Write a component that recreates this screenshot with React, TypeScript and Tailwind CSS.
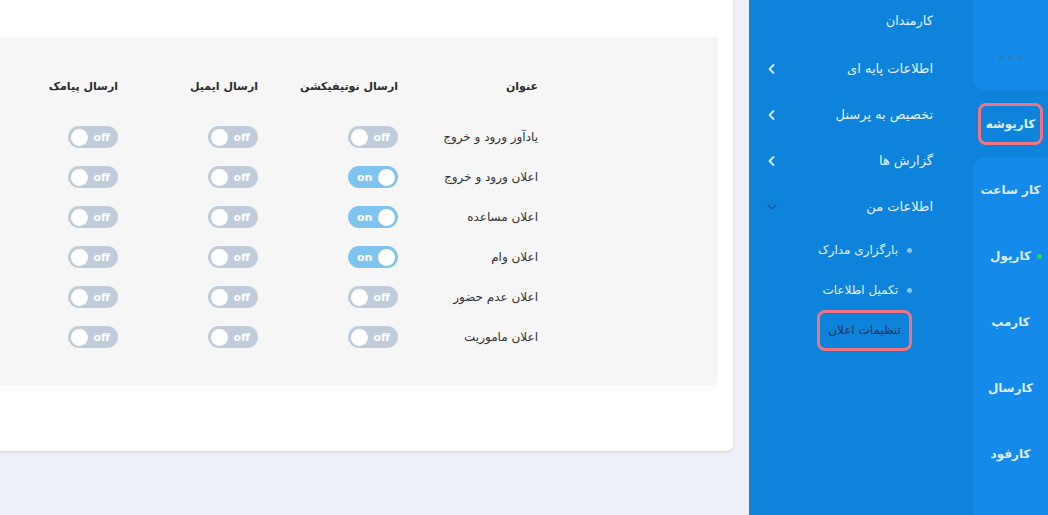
const font = { fontFamily: '"DejaVu Sans", "Noto Sans", sans-serif' };

type Row = { title: string; notif: boolean; email: boolean; sms: boolean };

const rows: Row[] = [
  { title: 'یادآور ورود و خروج', notif: false, email: false, sms: false },
  { title: 'اعلان ورود و خروج', notif: true, email: false, sms: false },
  { title: 'اعلان مساعده', notif: true, email: false, sms: false },
  { title: 'اعلان وام', notif: true, email: false, sms: false },
  { title: 'اعلان عدم حضور', notif: false, email: false, sms: false },
  { title: 'اعلان ماموریت', notif: false, email: false, sms: false },
];

function Toggle({ on }: { on: boolean }) {
  return on ? (
    <div className="w-[50px] h-[22px] rounded-full bg-[#7fc4ee] flex items-center justify-between pl-[9px] pr-[3px]" dir="ltr">
      <span className="text-white text-[11px] font-bold leading-none">on</span>
      <span className="w-[17px] h-[17px] rounded-full bg-white" />
    </div>
  ) : (
    <div className="w-[50px] h-[22px] rounded-full bg-[#c1ccdb] flex items-center justify-between pl-[3px] pr-[8px]" dir="ltr">
      <span className="w-[17px] h-[17px] rounded-full bg-white" />
      <span className="text-white text-[11px] font-bold leading-none">off</span>
    </div>
  );
}

function Chevron({ down = false }: { down?: boolean }) {
  return down ? (
    <svg width="14" height="14" viewBox="0 0 14 14" fill="none" stroke="#0b5fa3" strokeWidth="1.5" strokeLinecap="round">
      <path d="M3 5l4 4 4-4" />
    </svg>
  ) : (
    <svg width="14" height="14" viewBox="0 0 14 14" fill="none" stroke="#d6ebfd" strokeWidth="1.8" strokeLinecap="round" strokeLinejoin="round">
      <path d="M8.5 3L4.5 7l4 4" />
    </svg>
  );
}

function MenuItem({ label, chevron, down, className = '' }: { label: string; chevron?: boolean; down?: boolean; className?: string }) {
  return (
    <div className={`h-[46px] flex items-center justify-between pl-[16px] pr-[40px] ${className}`}>
      <div className="w-[14px]">{chevron && <Chevron down={down} />}</div>
      <span className="text-[13px] text-[#e3f1ff]">{label}</span>
    </div>
  );
}

function SubItem({ label }: { label: string }) {
  return (
    <div className="h-[40px] flex items-center justify-end pr-[61px] gap-[9px]">
      <span className="text-[12px] text-[#e3f1ff]">{label}</span>
      <span className="w-[5px] h-[5px] rounded-full bg-[#8cc6f6]" />
    </div>
  );
}

const railItems = ['کار ساعت', 'کارپول', 'کارمپ', 'کارسال', 'کارفود'];

export default function App() {
  return (
    <div className="w-[1048px] h-[515px] flex bg-[#edf0f7] overflow-hidden" style={font}>
      {/* محتوای اصلی */}
      <div className="w-[749px] pr-[16px]">
        <div className="h-[451px] bg-white rounded-br-[6px] shadow-[0_1px_3px_rgba(0,0,0,0.12)] pt-[37px] pr-[15px]">
          <div className="h-[349px] bg-[#f6f6f6] rounded-br-[6px] pr-[180px] pt-[38px]" dir="rtl">
            <div className="flex h-[24px] items-center">
              {['عنوان', 'ارسال نوتیفیکشن', 'ارسال ایمیل', 'ارسال پیامک'].map((h) => (
                <div key={h} className="w-[140px] shrink-0 text-[11px] font-bold text-[#2b2b2b]">{h}</div>
              ))}
            </div>
            <div className="mt-[18px]">
              {rows.map((r) => (
                <div key={r.title} className="flex h-[40px] items-center">
                  <div className="w-[140px] shrink-0 text-[12px] text-[#333]">{r.title}</div>
                  <div className="w-[140px] shrink-0"><Toggle on={r.notif} /></div>
                  <div className="w-[140px] shrink-0"><Toggle on={r.email} /></div>
                  <div className="w-[140px] shrink-0"><Toggle on={r.sms} /></div>
                </div>
              ))}
            </div>
          </div>
        </div>
      </div>

      {/* منوی کناری */}
      <div className="w-[224px] h-full bg-[#0e83db]">
        <div className="h-[42px] flex items-center justify-end pr-[40px] mb-[4px]">
          <span className="text-[13px] text-[#e3f1ff]">کارمندان</span>
        </div>
        <MenuItem label="اطلاعات پایه ای" chevron />
        <MenuItem label="تخصیص به پرسنل" chevron />
        <MenuItem label="گزارش ها" chevron />
        <MenuItem label="اطلاعات من" chevron down />
        <SubItem label="بارگزاری مدارک" />
        <SubItem label="تکمیل اطلاعات" />
        <div className="h-[40px] flex items-center justify-end pr-[61px]">
          <div className="w-[95px] h-[41px] border-[3px] border-[#f0737f] rounded-[8px] flex items-center justify-center">
            <span className="text-[12px] text-[#1d3552]">تنظیمات اعلان</span>
          </div>
        </div>
      </div>

      {/* نوار برنامه ها */}
      <div className="w-[75px] h-full bg-[#0e83db] flex flex-col">
        <div className="h-[90px] bg-[#148bea] rounded-bl-[12px] flex items-end justify-center pb-[30px] gap-[4px]">
          <span className="w-[5px] h-[5px] rounded-full border border-[#3c6f9d]" />
          <span className="w-[5px] h-[5px] rounded-full border border-[#3c6f9d]" />
          <span className="w-[5px] h-[5px] rounded-full border border-[#3c6f9d]" />
        </div>
        <div className="h-[67px] flex items-center justify-center">
          <div className="w-[65px] h-[42px] border-[3px] border-[#f0737f] rounded-[8px] flex items-center justify-center">
            <span className="text-[12px] font-bold text-[#dcecfc]">کارپوشه</span>
          </div>
        </div>
        <div className="flex-1 bg-[#148bea] rounded-tl-[12px]">
          {railItems.map((n) => (
            <div key={n} className="relative h-[66px] flex items-center justify-center">
              <span className="text-[12px] font-bold text-[#dcecfc]">{n}</span>
              {n === 'کارپول' && (
                <span className="absolute right-[6px] top-[31px] w-[5px] h-[5px] rounded-full bg-[#22e04a]" />
              )}
            </div>
          ))}
        </div>
      </div>
    </div>
  );
}
